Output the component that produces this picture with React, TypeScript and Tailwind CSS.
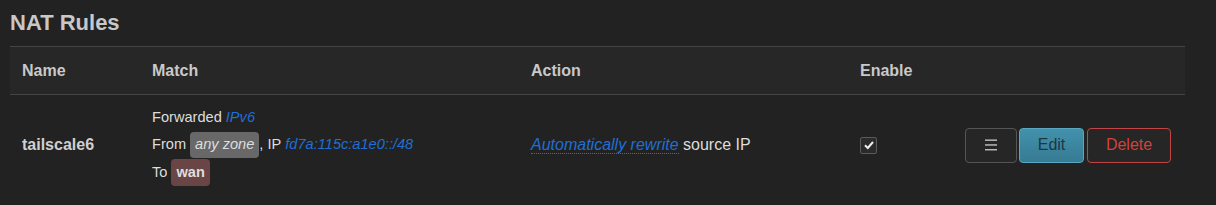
import React from "react";

export default function App() {
  const font = { fontFamily: '"Liberation Sans", Arial, sans-serif' };
  return (
    <div className="w-[1216px] h-[205px] bg-[#222222] overflow-hidden" style={font}>
      <div className="px-[10px] pt-[10px]">
        <h2 className="text-[22px] leading-[26px] font-bold text-[#c8c8c8] mb-[10px]">NAT Rules</h2>
        <div className="w-[1175px]">
          <div className="grid grid-cols-[130px_379px_329px_105px_232px] h-[49px] items-center bg-[#272727] border-t border-b border-[#444444] text-[16px] font-bold text-[#c9c9c9]">
            <div className="pl-[12px]">Name</div>
            <div className="pl-[12px]">Match</div>
            <div className="pl-[12px]">Action</div>
            <div className="pl-[12px]">Enable</div>
            <div className="pl-[12px]"></div>
          </div>
          <div className="grid grid-cols-[130px_379px_329px_105px_232px] items-center h-[100px] text-[#dddddd]">
            <div className="pl-[12px] text-[16px] font-bold text-[#d0d0d0]">tailscale6</div>
            <div className="pl-[12px] mt-[3px] text-[14.6px] flex flex-col">
              <div className="h-[22px] flex items-center">
                Forwarded&nbsp;<span className="italic text-[#1f6fd6]">IPv6</span>
              </div>
              <div className="h-[26px] mt-[3px] flex items-center">
                From&nbsp;
                <span className="h-[26px] px-[5px] rounded-[4px] bg-[#686868] italic text-[#dedede] flex items-center">any zone</span>
                ,&nbsp;IP&nbsp;<span className="italic text-[#1f6fd6]">fd7a:115c:a1e0::/48</span>
              </div>
              <div className="h-[27px] mt-[1px] flex items-center">
                To&nbsp;
                <span className="h-[27px] px-[5px] rounded-[4px] bg-[#6a4545] font-bold text-[#dedede] flex items-center">wan</span>
              </div>
            </div>
            <div className="pl-[12px] text-[16px]">
              <span className="italic text-[#1f6fd6] border-b border-dotted border-[#1f6fd6]">Automatically rewrite</span>
              <span> source IP</span>
            </div>
            <div className="pl-[12px]">
              <div className="w-[17px] h-[17px] rounded-[2px] border border-[#5a5a5a] bg-[#2b2b2b] flex items-center justify-center">
                <svg width="12" height="12" viewBox="0 0 12 12">
                  <path d="M2 6.3 L4.8 9 L10 3" fill="none" stroke="#eeeeee" strokeWidth="2" />
                </svg>
              </div>
            </div>
            <div className="pl-[12px] flex items-center">
              <button className="w-[52px] h-[35px] rounded-[4px] border border-[#555555] bg-[#262626] flex items-center justify-center">
                <svg width="12" height="12" viewBox="0 0 12 12">
                  <rect x="0" y="0.5" width="12" height="1.3" fill="#cccccc" />
                  <rect x="0" y="5.3" width="12" height="1.3" fill="#cccccc" />
                  <rect x="0" y="10.1" width="12" height="1.3" fill="#cccccc" />
                </svg>
              </button>
              <button className="ml-[2px] w-[65px] h-[35px] rounded-[4px] border border-[#5aa7c2] bg-gradient-to-b from-[#4391ac] to-[#367b93] text-[16px] text-[#1d3644]">
                Edit
              </button>
              <button className="ml-[3px] w-[84px] h-[35px] rounded-[4px] border border-[#c24444] bg-[#262626] text-[16px] text-[#d2423d]">
                Delete
              </button>
            </div>
          </div>
        </div>
      </div>
    </div>
  );
}
